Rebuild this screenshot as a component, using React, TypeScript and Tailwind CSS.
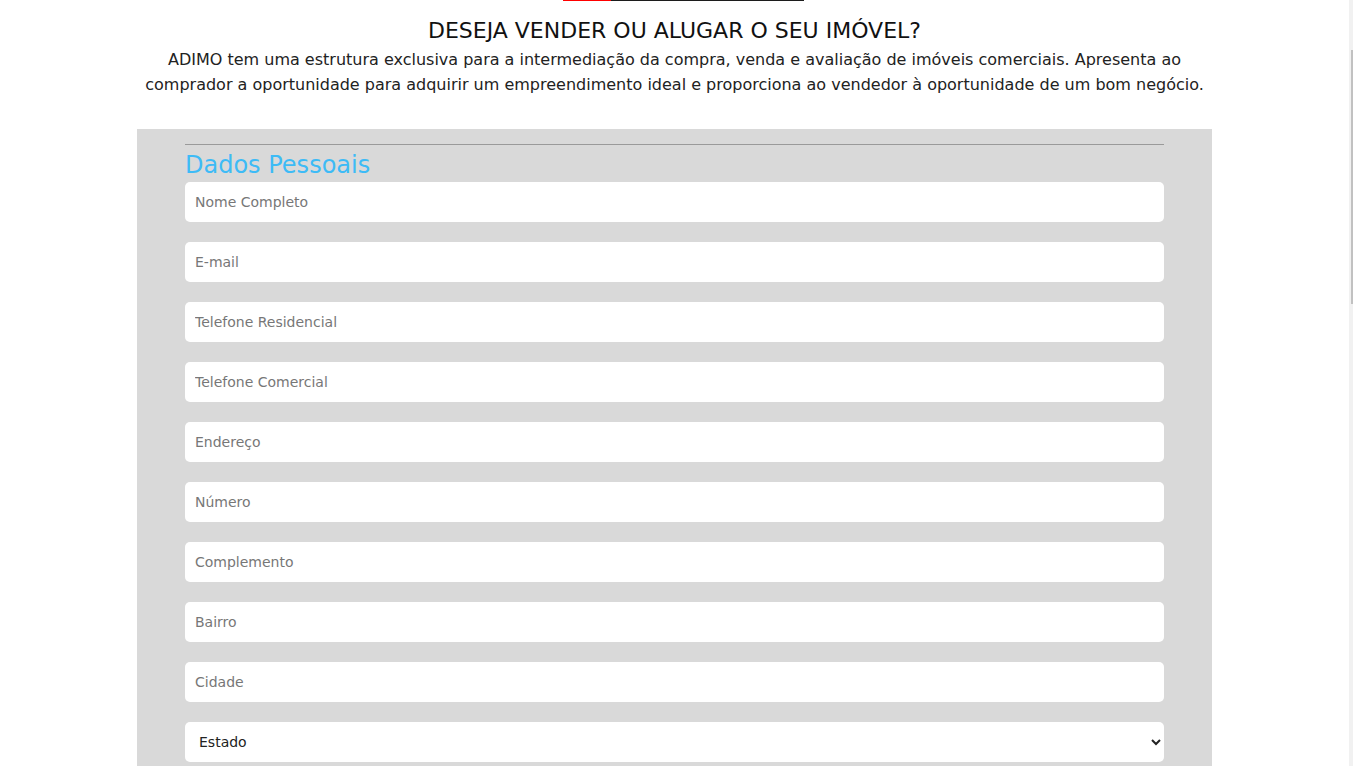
const FIELDS = [
  "Nome Completo",
  "E-mail",
  "Telefone Residencial",
  "Telefone Comercial",
  "Endereço",
  "Número",
  "Complemento",
  "Bairro",
  "Cidade",
];

const ESTADOS = ["Estado", "SP", "RJ", "MG", "PR", "SC", "RS"];

export default function App() {
  return (
    <div className="relative h-[766px] overflow-hidden bg-white font-['DejaVu_Sans',sans-serif] text-[#111]">
      {/* fake scrollbar */}
      <div className="absolute right-0 top-0 h-full w-[4px] bg-[#f1f1f1]">
        <div className="ml-[2px] mt-[50px] h-[254px] w-[2px] bg-[#c1c1c1]" />
      </div>

      <div className="w-[1349px]">
        {/* underline left from the section above */}
        <div className="ml-[563px] flex h-[1px]">
          <div className="w-[48px] bg-[#ff0000]" />
          <div className="w-[193px] bg-[#1c1c1c]" />
        </div>

        <h2 className="mt-[16px] text-center text-[22px] leading-[28px]">
          DESEJA VENDER OU ALUGAR O SEU IMÓVEL?
        </h2>
        <p className="mx-auto mt-[2px] w-[1090px] text-center text-[16px] leading-[25px] text-[#222]">
          ADIMO tem uma estrutura exclusiva para a intermediação da compra, venda e
          avaliação de imóveis comerciais. Apresenta ao comprador a oportunidade para
          adquirir um empreendimento ideal e proporciona ao vendedor à oportunidade de
          um bom negócio.
        </p>

        <form className="mx-auto mt-[32px] w-[1075px] bg-[#d9d9d9] px-[48px] pt-[15px] pb-[20px]">
          <hr className="border-t border-[#9a9a9a]" />
          <h3 className="mt-[3px] text-[24px] leading-[34px] text-[#3dbbf6]">Dados Pessoais</h3>
          <div className="flex flex-col gap-[20px]">
            {FIELDS.map((f) => (
              <input
                key={f}
                type="text"
                placeholder={f}
                className="h-[40px] w-full rounded-[5px] bg-white px-[10px] text-[14px] text-[#333] outline-none placeholder:text-[#777]"
              />
            ))}
            <select className="h-[40px] w-full rounded-[5px] bg-white pl-[10px] pr-[4px] text-[14px] text-[#222] outline-none">
              {ESTADOS.map((e) => (
                <option key={e}>{e}</option>
              ))}
            </select>
          </div>
        </form>
      </div>
    </div>
  );
}
